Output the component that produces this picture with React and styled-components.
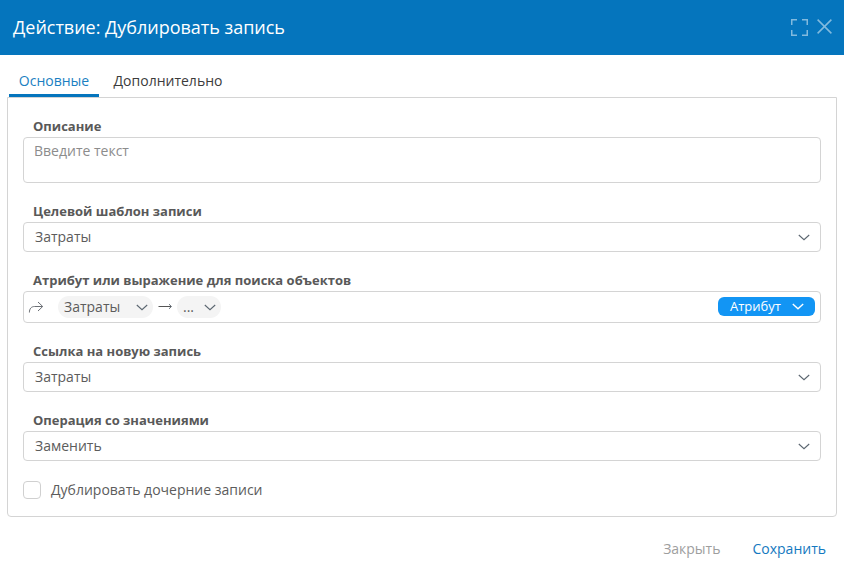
import React from "react";
import styled, { createGlobalStyle } from "styled-components";

const GlobalStyle = createGlobalStyle`
  *, *::before, *::after { box-sizing: border-box; }
  body {
    margin: 0;
    background: #fff;
    color: #5c5c5c;
    font: 400 14px/20px "Open Sans", "Noto Sans", sans-serif;
  }
`;

const Dialog = styled.div`
  display: flex;
  flex-direction: column;
  width: 844px;
  height: 569px;
`;

const Header = styled.header`
  display: flex;
  align-items: center;
  flex: none;
  height: 55px;
  padding: 0 12px 1px 13px;
  background: #0575bd;
  color: #fff;
`;

const Title = styled.h1`
  flex: 1;
  margin: 0;
  font-size: 18px;
  line-height: 24px;
  font-weight: 400;
  letter-spacing: -0.02px;
  white-space: nowrap;
`;

const HeaderButtons = styled.div`
  display: flex;
  align-items: flex-start;
  gap: 9px;
`;

const IconButton = styled.button`
  display: flex;
  padding: 0;
  border: 0;
  background: none;
  color: #82bade;
`;

const Tabs = styled.nav`
  display: flex;
  flex: none;
  height: 42px;
  padding: 11px 0 0 9px;
`;

const Tab = styled.button`
  height: 31px;
  padding: 1px 0 0;
  width: ${(p) => p.$width}px;
  border: 0;
  border-bottom: 3px solid ${(p) => (p.$active ? "#0575bd" : "transparent")};
  background: none;
  color: ${(p) => (p.$active ? "#1b7fc2" : "#3c3c3c")};
  font: inherit;
  text-align: center;
  white-space: nowrap;
`;

const Panel = styled.main`
  flex: none;
  height: 420px;
  margin: 0 7px;
  padding: 19px 15px 0;
  border: 1px solid #d4d4d4;
  border-radius: 0 0 4px 4px;
`;

const Field = styled.div`
  display: flex;
  flex-direction: column;
  margin-bottom: 19px;
`;

const Label = styled.label`
  height: 20px;
  padding-left: 10px;
  font-size: 13px;
  line-height: 19px;
  font-weight: 700;
  color: #595959;
`;

const TextArea = styled.textarea`
  display: block;
  height: 46px;
  padding: 3px 10px;
  border: 1px solid #d4d4d4;
  border-radius: 4px;
  resize: none;
  outline: 0;
  font: inherit;
  &::placeholder { color: #8c8c8c; opacity: 1; }
`;

const Control = styled.div`
  display: flex;
  align-items: center;
  justify-content: space-between;
  height: 30px;
  padding: 0 10px 0 11px;
  border: 1px solid #d4d4d4;
  border-radius: 4px;
`;

const PathControl = styled(Control)`
  height: 32px;
  padding: 0 5px 0 4px;
`;

const PathItems = styled.div`
  display: flex;
  align-items: center;
`;

const Chip = styled.span`
  display: flex;
  align-items: center;
  justify-content: space-between;
  width: ${(p) => p.$width}px;
  height: 22px;
  padding: 0 5px 0 6px;
  border-radius: 11px;
  background: #f4f4f4;
`;

const ShareSlot = styled.span`
  display: flex;
  width: 30px;
`;

const ArrowSlot = styled.span`
  display: flex;
  justify-content: center;
  width: 24px;
  padding-bottom: 1px;
`;

const ModeButton = styled.button`
  display: flex;
  align-items: center;
  justify-content: space-between;
  width: 97px;
  height: 19px;
  padding: 0 11px 1px 12px;
  margin-bottom: 1px;
  border: 0;
  border-radius: 6px;
  background: #1295f4;
  color: #fff;
  font: 400 13px/18px "Open Sans", "Noto Sans", sans-serif;
`;

const CheckRow = styled.label`
  display: flex;
  align-items: center;
  gap: 10px;
  height: 18px;
  margin-top: 20px;
`;

const CheckBox = styled.span`
  width: 18px;
  height: 18px;
  border: 1px solid #d0d0d0;
  border-radius: 4px;
`;

const Footer = styled.footer`
  display: flex;
  justify-content: flex-end;
  gap: 32px;
  padding: 22px 18px 0 0;
`;

const FooterButton = styled.button`
  padding: 0;
  border: 0;
  background: none;
  font: inherit;
  color: ${(p) => (p.$primary ? "#1479c0" : "#9e9e9e")};
`;

const ChevronSvg = styled.svg`
  flex: none;
  color: ${(p) => p.$color};
`;

const Chevron = ({ stroke = 1.1, color = "#5b6670" }) => (
  <ChevronSvg $color={color} width="12" height="7" viewBox="0 0 12 7" fill="none" stroke="currentColor" strokeWidth={stroke}>
    <path d="M.8 1 6 5.700 11.200 1" />
  </ChevronSvg>
);

const ExpandIcon = () => (
  <svg width="17" height="17" viewBox="0 0 17 17" fill="none" stroke="currentColor" strokeWidth="1.5">
    <path d="M.75 6V.75H6M11 .75h5.25V6M16.25 11v5.25H11M6 16.25H.75V11" />
  </svg>
);

const CloseIcon = () => (
  <svg width="15" height="15" viewBox="0 0 15 15" fill="none" stroke="currentColor" strokeWidth="1.5">
    <path d="m.6.6 13.8 13.8M14.4.6.6 14.4" />
  </svg>
);

const ShareArrow = () => (
  <svg width="16" height="12" viewBox="0 0 16 12" fill="none" stroke="#6b6f75" strokeWidth="1">
    <path d="M1.400 11.500C1.400 7.500 3.500 5.500 6.500 5.500H14.500M10 1l4.700 4.500L10 10" />
  </svg>
);

const RightArrow = () => (
  <svg width="14" height="7" viewBox="0 0 14 7">
    <path d="M.5 3.500H13" stroke="#555" fill="none" />
    <path d="M11 1.200 13.500 3.500 11 5.800" stroke="#66707a" fill="none" />
  </svg>
);

const SelectField = ({ label, value }) => (
  <Field>
    <Label>{label}</Label>
    <Control>
      {value}
      <Chevron />
    </Control>
  </Field>
);

export default function App() {
  return (
    <>
      <GlobalStyle />
      <Dialog>
        <Header>
          <Title>Действие: Дублировать запись</Title>
          <HeaderButtons>
            <IconButton aria-label="Развернуть"><ExpandIcon /></IconButton>
            <IconButton aria-label="Закрыть окно"><CloseIcon /></IconButton>
          </HeaderButtons>
        </Header>
        <Tabs>
          <Tab $active $width={90}>Основные</Tab>
          <Tab $width={138}>Дополнительно</Tab>
        </Tabs>
        <Panel>
          <Field>
            <Label>Описание</Label>
            <TextArea placeholder="Введите текст" />
          </Field>
          <SelectField label="Целевой шаблон записи" value="Затраты" />
          <Field>
            <Label>Атрибут или выражение для поиска объектов</Label>
            <PathControl>
              <PathItems>
                <ShareSlot><ShareArrow /></ShareSlot>
                <Chip $width={95}>Затраты<Chevron /></Chip>
                <ArrowSlot><RightArrow /></ArrowSlot>
                <Chip $width={44}>...<Chevron /></Chip>
              </PathItems>
              <ModeButton>Атрибут<Chevron stroke={1.4} color="#fff" /></ModeButton>
            </PathControl>
          </Field>
          <SelectField label="Ссылка на новую запись" value="Затраты" />
          <SelectField label="Операция со значениями" value="Заменить" />
          <CheckRow>
            <CheckBox />
            Дублировать дочерние записи
          </CheckRow>
        </Panel>
        <Footer>
          <FooterButton>Закрыть</FooterButton>
          <FooterButton $primary>Сохранить</FooterButton>
        </Footer>
      </Dialog>
    </>
  );
}
